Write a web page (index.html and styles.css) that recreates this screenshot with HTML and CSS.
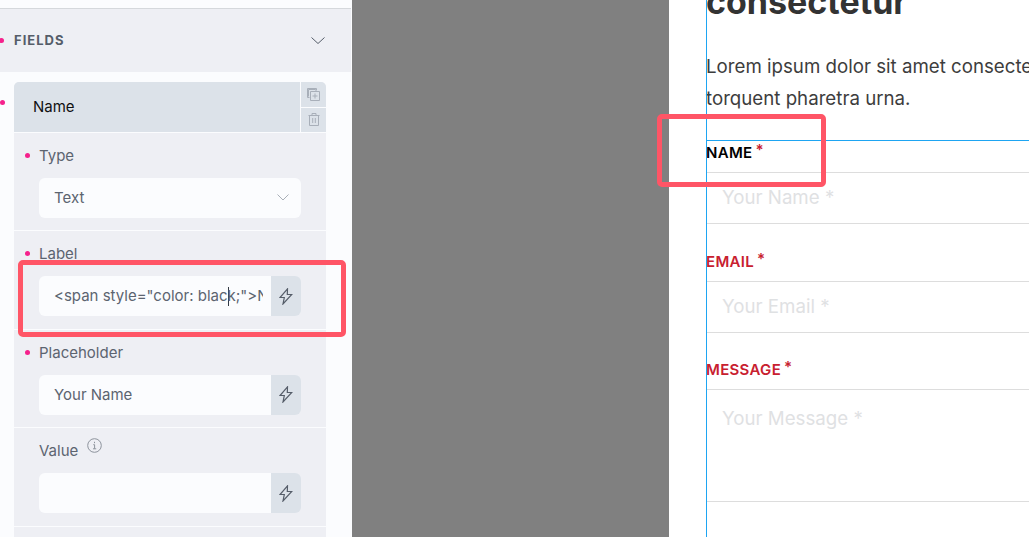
FILE: index.html
```html
<!DOCTYPE html>
<html>
<head>
    <meta name="viewport" content="width=device-width, initial-scale=1.0">
    <meta charset="UTF-8" />
    <title>Form editor</title>
    <link rel="stylesheet" href="styles.css">
</head>
<body>
    <div class="page">

        <!-- settings panel -->
        <aside class="panel">
            <div class="section-head dot-host">
                <span class="section-title">FIELDS</span>
                <svg class="chevron" width="16" height="9" viewBox="0 0 16 9"><path d="M1.500 1.500 8 7.500l6.500-6"/></svg>
            </div>
            <div class="section-body">
                <div class="repeater">
                    <div class="item-head">
                        <div class="item-name">Name</div>
                        <div class="item-tools">
                            <button type="button" class="tool">
                                <svg width="13" height="13" viewBox="0 0 13 13"><path d="M2.500 9.500H.5V.5h9v2"/><path d="M1.500 8.500v-7h7v1"/><path d="M3.500 3.500h9v9h-9zM8 5.500v5M5.500 8h5"/></svg>
                            </button>
                            <button type="button" class="tool">
                                <svg width="12" height="13" viewBox="0 0 12 13"><path d="M.5 2.500h11M4 2.500V.5h4v2M1.500 2.500v10h9v-10M4.700 5v5M7.300 5v5"/></svg>
                            </button>
                        </div>
                    </div>

                    <div class="control">
                        <label class="control-label dot-host">Type</label>
                        <div class="select-box">
                            <span>Text</span>
                            <svg class="chevron chevron-light" width="12" height="7" viewBox="0 0 12 7"><path d="M.5.5l5.500 5.500L11.500.5"/></svg>
                        </div>
                    </div>

                    <div class="control">
                        <label class="control-label dot-host">Label</label>
                        <div class="input-group">
                            <div class="fake-input"><span>&lt;span style="color: blac<i class="caret"></i>k;"&gt;NAME&lt;/span&gt;</span></div>
                            <button type="button" class="bolt">
                                <svg width="14" height="17" viewBox="0 0 14 17"><path d="M8.500.8 1 9.500h4.300L4 16l8.800-9.500H8.300L8.500.8Z"/></svg>
                            </button>
                        </div>
                    </div>

                    <div class="control">
                        <label class="control-label dot-host">Placeholder</label>
                        <div class="input-group">
                            <input class="text-input" type="text" value="Your Name">
                            <button type="button" class="bolt">
                                <svg width="14" height="17" viewBox="0 0 14 17"><path d="M8.500.8 1 9.500h4.300L4 16l8.800-9.500H8.300L8.500.8Z"/></svg>
                            </button>
                        </div>
                    </div>

                    <div class="control">
                        <label class="control-label control-label-info">Value
                            <svg class="info" width="15" height="15" viewBox="0 0 15 15"><circle cx="7.500" cy="7.500" r="6.800"/><path d="M6.300 6.700h1.300v4M6 10.800h3.200M7.500 3.800v1.400"/></svg>
                        </label>
                        <div class="input-group">
                            <input class="text-input" type="text">
                            <button type="button" class="bolt">
                                <svg width="14" height="17" viewBox="0 0 14 17"><path d="M8.500.8 1 9.500h4.300L4 16l8.800-9.500H8.300L8.500.8Z"/></svg>
                            </button>
                        </div>
                    </div>
                </div>
            </div>
        </aside>

        <div class="backdrop"></div>

        <!-- live preview -->
        <main class="preview">
            <h2 class="preview-title">consectetur</h2>
            <p class="preview-text">Lorem ipsum dolor sit amet consectetur adipiscing elit<br>torquent pharetra urna.</p>

            <form class="preview-form">
                <div class="field">
                    <label class="field-label field-label-black">NAME<sup>*</sup></label>
                    <input class="field-input" type="text" placeholder="Your Name *">
                </div>
                <div class="field">
                    <label class="field-label">EMAIL<sup>*</sup></label>
                    <input class="field-input" type="text" placeholder="Your Email *">
                </div>
                <div class="field">
                    <label class="field-label">MESSAGE<sup>*</sup></label>
                    <textarea class="field-input field-area" placeholder="Your Message *"></textarea>
                </div>
            </form>
        </main>

        <!-- annotations drawn over the screenshot -->
        <div class="mark mark-label"></div>
        <div class="mark mark-name"></div>
    </div>
</body>
</html>
```

FILE: styles.css
```css
* {
    box-sizing: border-box;
}

html, body {
    margin: 0;
    height: 537px;
    overflow: hidden;
}

body {
    font-family: Inter, "Noto Sans", sans-serif;
    font-optical-sizing: none;
    background-color: #ffffff;
}

.page {
    position: relative;
    display: flex;
    width: 1029px;
    height: 537px;
    overflow: hidden;
}

/* left panel */
.panel {
    width: 352px;
    flex: none;
    padding-top: 8px;
    background-color: #fbfcfe;
}

.section-head {
    display: flex;
    align-items: center;
    justify-content: space-between;
    height: 64px;
    padding: 0 25px 0 14px;
    border-top: 1px solid #d5d8dc;
    background-color: #eeeff4;
    margin-right: 1px;
}

.section-title {
    margin-bottom: 2px;
    font-size: 13px;
    font-weight: 700;
    letter-spacing: 1px;
    color: #555d69;
}

.chevron {
    fill: none;
    stroke: #555d69;
    stroke-width: 1;
}

.chevron-light {
    stroke: #a9afb8;
}

.section-body {
    padding: 10px 26px 0 14px;
}

.repeater {
    min-height: 460px;
    background-color: #eeeff4;
    border-radius: 5px 5px 0 0;
}

.item-head {
    position: relative;
    display: flex;
    height: 51px;
    border-bottom: 1px solid #fbfcfe;
    background-color: #dce2e9;
    border-radius: 5px 5px 0 0;
}

/* pink dots mark the responsive controls */
.dot-host {
    position: relative;
}

.dot-host::before {
    content: "";
    position: absolute;
    top: 50%;
    left: -14px;
    width: 5px;
    height: 5px;
    margin-top: -3px;
    border-radius: 50%;
    background-color: #f5218c;
}

.section-head.dot-host::before {
    left: -1px;
}

.item-head::before {
    content: "";
    position: absolute;
    top: 18px;
    left: -14px;
    width: 5px;
    height: 5px;
    border-radius: 50%;
    background-color: #f5218c;
}

.item-name {
    flex: 1;
    padding: 0 0 0 19px;
    font-size: 15px;
    line-height: 50px;
    color: #111111;
}

.item-tools {
    display: flex;
    flex-direction: column;
    width: 26px;
    border-left: 1px solid #fbfcfe;
}

.tool {
    flex: 1;
    display: flex;
    align-items: center;
    justify-content: center;
    padding: 0;
    border: none;
    background: none;
}

.tool + .tool {
    border-top: 1px solid #fbfcfe;
}

.tool svg {
    fill: none;
    stroke: #a8afb9;
    stroke-width: 1;
}

.control {
    height: 98.4px;
    padding: 12px 25px;
    border-bottom: 1px solid #fbfcfe;
}

.control-label {
    display: block;
    width: fit-content;
    height: 22px;
    margin-bottom: 11px;
    font-size: 15px;
    line-height: 22px;
    color: #5c6470;
}

.control-label-info {
    display: flex;
    gap: 9px;
}

.info {
    margin-top: -2px;
    fill: none;
    stroke: #8d939c;
    stroke-width: 1;
}

.select-box {
    display: flex;
    align-items: center;
    justify-content: space-between;
    height: 40px;
    padding: 0 12px 1px 15px;
    border-radius: 6px;
    background-color: #fbfcfe;
    font-size: 15px;
    color: #5c6470;
}

.input-group {
    display: flex;
    height: 40px;
}

.text-input, .fake-input {
    flex: 1;
    min-width: 0;
    height: 40px;
    padding: 0 8px 0 15px;
    border: none;
    border-radius: 6px 0 0 6px;
    outline: none;
    background-color: #fbfcfe;
    font-family: inherit;
    font-size: 15px;
    color: #5c6470;
}

.fake-input {
    line-height: 40px;
    white-space: nowrap;
    overflow: hidden;
}

.fake-input span {
    display: block;
    overflow: hidden;
}

.caret {
    display: inline-block;
    width: 0;
    height: 19px;
    margin-right: -1px;
    border-left: 1px solid #333a44;
    vertical-align: -5px;
}

.bolt {
    display: flex;
    align-items: center;
    justify-content: center;
    width: 30px;
    flex: none;
    padding: 0;
    border: none;
    border-radius: 0 6px 6px 0;
    background-color: #dce2e9;
}

.bolt svg {
    fill: none;
    stroke: #555d69;
    stroke-width: 1.2;
}

/* dimmed area between panel and page */
.backdrop {
    width: 317px;
    flex: none;
    background-color: #808080;
}

/* preview page */
.preview {
    position: relative;
    flex: 1;
    min-width: 0;
    padding-left: 37px;
    overflow: hidden;
    background-color: #ffffff;
}

.preview::before {
    content: "";
    position: absolute;
    top: 0;
    bottom: 0;
    left: 37px;
    width: 1px;
    background-color: #1ea5f2;
}

.preview-title {
    margin: -18px 0 0;
    font-size: 34px;
    font-weight: 700;
    line-height: 40px;
    color: #333333;
    white-space: nowrap;
}

.preview-text {
    width: 600px;
    margin: 29px 0 25px;
    font-size: 18.7px;
    line-height: 32px;
    color: #3d3d3d;
}

.preview-form {
    width: 600px;
    border-top: 1px solid #1ea5f2;
}

.field {
    margin-bottom: 25.5px;
}

.field-label {
    display: block;
    height: 31px;
    font-size: 15px;
    font-weight: 600;
    line-height: 23px;
    letter-spacing: 0.3px;
    color: #c8202f;
}

.field-label-black {
    color: #000000;
}

.field-label sup {
    margin-left: 3px;
    font-size: 15px;
    line-height: 0;
    vertical-align: 3px;
    color: #c8202f;
}

.field-input {
    display: block;
    width: 100%;
    height: 52px;
    padding: 0 16px 1px;
    border: none;
    border-top: 1px solid #dddddd;
    border-bottom: 1px solid #dddddd;
    outline: none;
    font-family: inherit;
    font-size: 18.7px;
    background: none;
}

.field-input::placeholder {
    color: #dfe1e3;
    opacity: 1;
}

.field-area {
    height: 113px;
    padding-top: 17px;
    resize: none;
}

/* red boxes */
.mark {
    position: absolute;
    border: 5px solid #ff5566;
    border-radius: 5px;
}

.mark-label {
    left: 18px;
    top: 260px;
    width: 328px;
    height: 77px;
}

.mark-name {
    left: 657px;
    top: 114px;
    width: 169px;
    height: 73px;
}
```
